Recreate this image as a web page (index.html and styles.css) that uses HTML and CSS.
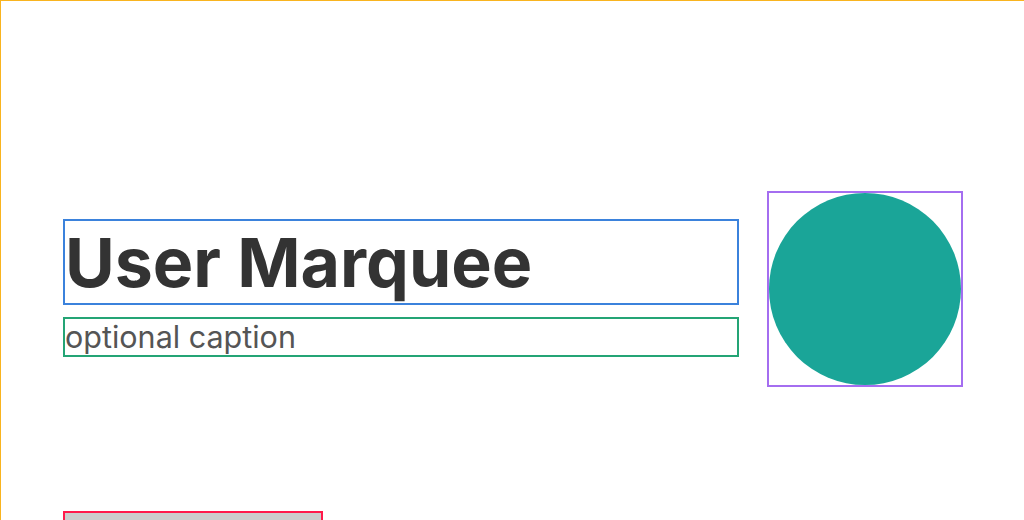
FILE: index.html
```html
<!DOCTYPE html>
<html lang="en">
<head>
<meta charset="utf-8">
<title>User Marquee</title>
<link rel="stylesheet" href="styles.css">
</head>
<body>
<div class="frame">
  <section class="hero">
    <div class="hero-text">
      <h1 class="title">User Marquee</h1>
      <p class="caption">optional caption</p>
    </div>
    <div class="avatar-box"><div class="avatar"></div></div>
  </section>
  <div class="bar"></div>
</div>
</body>
</html>
```
FILE: styles.css
```css
html, body {
  margin: 0;
  padding: 0;
  background: #fff;
  overflow: hidden;
}
body {
  font-family: Inter, "Liberation Sans", sans-serif;
}
.frame {
  border-top: 1px solid #f9b41f;
  border-left: 1px solid #f9b41f;
  padding: 62px 61px 62px 62px;
  height: 600px;
}
.hero {
  display: flex;
  align-items: center;
  gap: 28px;
  margin-top: 128px;
}
.hero-text {
  flex: 1;
  display: flex;
  flex-direction: column;
  gap: 12px;
  margin-top: -2px;
}
.title {
  margin: 0;
  border: 2px solid #3b82dc;
  font-size: 68px;
  font-weight: 700;
  line-height: 82px;
  color: #333;
}
.caption {
  margin: 0;
  border: 2px solid #24a475;
  font-size: 30.5px;
  line-height: 36px;
  color: #555;
}
.avatar-box {
  width: 192px;
  height: 192px;
  border: 2px solid #a46ef0;
  flex: none;
}
.avatar {
  width: 192px;
  height: 192px;
  border-radius: 50%;
  background: #1aa598;
}
.bar {
  margin-top: 124px;
  width: 256px;
  height: 40px;
  background: #ccc;
  border: 2px solid #ff1a4b;
}
```
